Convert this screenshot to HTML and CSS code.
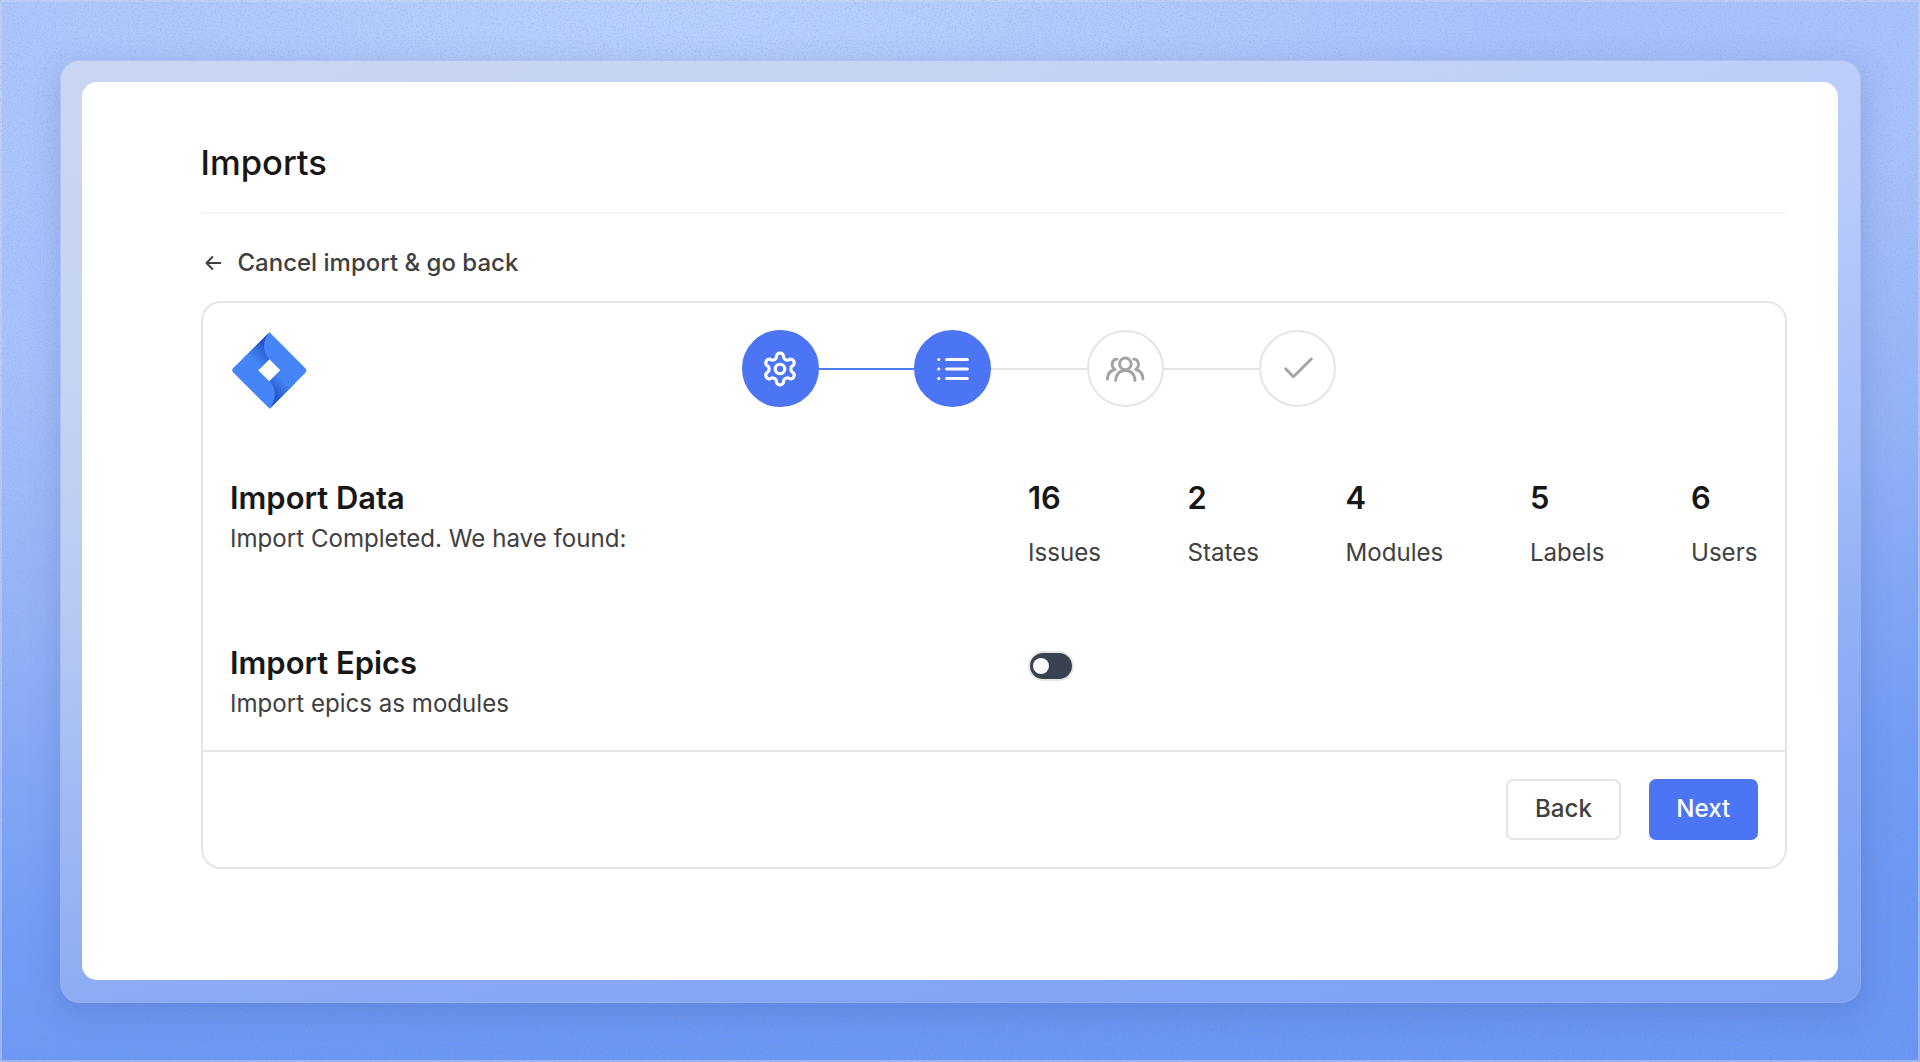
FILE: index.html
```html
<!DOCTYPE html>
<html lang="en">
<head>
<meta charset="utf-8">
<title>Imports</title>
<link rel="stylesheet" href="styles.css">
</head>
<body>
<div class="backdrop">
  <svg class="grain" aria-hidden="true">
    <filter id="noise" x="0" y="0" width="100%" height="100%">
      <feTurbulence type="fractalNoise" baseFrequency="0.6" numOctaves="2" seed="4"/>
      <feColorMatrix values="0 0 0 0 0.25  0 0 0 0 0.38  0 0 0 0 0.7  0 0 0 -7 3.3"/>
    </filter>
    <rect width="100%" height="100%" filter="url(#noise)"/>
  </svg>
  <div class="frame">
    <main class="window">
      <h1 class="page-title">Imports</h1>
      <a class="back-link">
        <svg class="back-arrow" viewBox="0 0 18 18"><path d="M16.4 9H2.400M8.400 3 2.400 9l6 6"/></svg>
        <span>Cancel import &amp; go back</span>
      </a>
      <section class="card">
        <div class="card-body">
          <header class="card-head">
            <svg class="logo" viewBox="96 97 224 230">
              <defs>
                <linearGradient id="fold-top" gradientUnits="userSpaceOnUse" x1="198" y1="136" x2="158" y2="176"><stop offset="0" stop-color="#2353c6"/><stop offset="1" stop-color="#4585f7"/></linearGradient>
                <linearGradient id="fold-bottom" gradientUnits="userSpaceOnUse" x1="220" y1="290" x2="260" y2="250"><stop offset="0" stop-color="#2353c6"/><stop offset="1" stop-color="#4585f7"/></linearGradient>
              </defs>
              <path fill="#4585f7" fill-rule="evenodd" d="M208.500 98 316 206q6 6 0 13L209 327 99 218q-5-6 0-12ZM208 179 174.500 212 208 245 241 212Z"/>
              <path fill="url(#fold-top)" d="M208 98 130 175 170 216 174.500 212 208 179C187 158 186 125 208 98Z"/>
              <path fill="url(#fold-bottom)" d="M209 327 286 250 246 208 241 212 208 245C229 266 230 300 209 327Z"/>
            </svg>
            <div class="steps">
              <div class="step active"><svg class="icon" viewBox="0 0 24 24"><path d="M12.220 2h-.44a2 2 0 0 0-2 2v.18a2 2 0 0 1-1 1.730l-.43.25a2 2 0 0 1-2 0l-.15-.08a2 2 0 0 0-2.730.73l-.22.38a2 2 0 0 0 .73 2.730l.15.1a2 2 0 0 1 1 1.720v.51a2 2 0 0 1-1 1.740l-.15.09a2 2 0 0 0-.73 2.730l.22.38a2 2 0 0 0 2.730.73l.15-.08a2 2 0 0 1 2 0l.43.25a2 2 0 0 1 1 1.730V20a2 2 0 0 0 2 2h.44a2 2 0 0 0 2-2v-.18a2 2 0 0 1 1-1.730l.43-.25a2 2 0 0 1 2 0l.15.08a2 2 0 0 0 2.730-.73l.22-.39a2 2 0 0 0-.73-2.730l-.15-.08a2 2 0 0 1-1-1.740v-.5a2 2 0 0 1 1-1.740l.15-.09a2 2 0 0 0 .73-2.730l-.22-.38a2 2 0 0 0-2.730-.73l-.15.08a2 2 0 0 1-2 0l-.43-.25a2 2 0 0 1-1-1.730V4a2 2 0 0 0-2-2z"/><circle cx="12" cy="12" r="3"/></svg></div>
              <div class="link active"></div>
              <div class="step active"><svg class="icon" viewBox="0 0 24 24"><path d="M8 6h13M8 12h13M8 18h13M3 6h.01M3 12h.01M3 18h.01"/></svg></div>
              <div class="link"></div>
              <div class="step"><svg class="icon-wide" viewBox="63 61.5 120 120"><circle cx="124" cy="106" r="17.500"/><path d="M95 156C95 138 107 126 124 126S153 138 153 156M99 92C85 91 78 113 93 123 78 126 71 137 70 152M149 92C163 91 170 113 155 123 170 126 176 137 177 152"/></svg></div>
              <div class="link"></div>
              <div class="step"><svg class="icon-wide" viewBox="65 61.5 120 120"><path d="M88 121 111 145 165 91.500"/></svg></div>
            </div>
          </header>
          <div class="row">
            <div>
              <h2 class="heading">Import Data</h2>
              <p class="text">Import Completed. We have found:</p>
            </div>
            <div class="stats">
              <div class="stat"><h3 class="heading">16</h3><p class="text">Issues</p></div>
              <div class="stat"><h3 class="heading">2</h3><p class="text">States</p></div>
              <div class="stat"><h3 class="heading">4</h3><p class="text">Modules</p></div>
              <div class="stat"><h3 class="heading">5</h3><p class="text">Labels</p></div>
              <div class="stat"><h3 class="heading">6</h3><p class="text">Users</p></div>
            </div>
          </div>
          <div class="row">
            <div>
              <h2 class="heading">Import Epics</h2>
              <p class="text">Import epics as modules</p>
            </div>
            <button class="toggle" type="button" role="switch" aria-checked="false" aria-label="Import epics as modules"><span class="knob"></span></button>
          </div>
        </div>
        <footer class="card-foot">
          <button class="btn" type="button">Back</button>
          <button class="btn primary" type="button">Next</button>
        </footer>
      </section>
    </main>
  </div>
</div>
</body>
</html>
```
FILE: styles.css
```css
* { box-sizing: border-box; }
body {
  margin: 0;
  font-family: Inter, "Liberation Sans", sans-serif;
  font-size: 24.1px;
  line-height: 34.5px;
  color: #404040;
}
h1, h2, h3, p { margin: 0; }

.backdrop {
  position: relative;
  width: 1920px;
  height: 1062px;
  padding: 60px 59px 59px 60px;
  background:
    radial-gradient(ellipse 900px 500px at 36% 0, rgba(200, 220, 253, .55), rgba(200, 220, 253, 0)),
    linear-gradient(174deg, #a9c2fb 0%, #a8c1fb 28%, #93b2f8 50%, #85a8f6 60%, #719bf5 75%, #6b96f4 86%, #6894f3 100%);
  box-shadow: inset 0 0 0 2px rgba(205, 215, 238, .5);
}
.grain {
  position: absolute;
  inset: 0;
  width: 100%;
  height: 100%;
  opacity: .25;
}
.frame {
  position: relative;
  height: 943px;
  padding: 22px 23.5px 23px 22px;
  border-radius: 20px;
  background:
    linear-gradient(155deg, rgba(246, 243, 232, .42) 0%, rgba(246, 243, 232, .36) 30%, rgba(240, 243, 250, .2) 56%, rgba(240, 243, 250, .12) 100%),
    linear-gradient(174deg, #a9c2fb 0%, #a8c1fb 28%, #93b2f8 50%, #7ea2f5 66%, #6f98f3 84%, #6b96f3 100%);
  box-shadow:
    inset 0 0 0 1px rgba(160, 178, 232, .5),
    0 7px 30px rgba(60, 75, 150, .25);
}

.window {
  height: 897.5px;
  padding: 56.4px 50.5px 0 118.5px;
  border-radius: 15px;
  background: #fff;
}
.page-title {
  padding-bottom: 25px;
  border-bottom: 2px solid #f5f5f5;
  font-size: 34.6px;
  line-height: 48.3px;
  font-weight: 500;
  color: #171717;
}
.back-link {
  display: flex;
  align-items: center;
  gap: 16px;
  margin: 32px 0 21px;
  padding-left: 3px;
  font-size: 24px;
  font-weight: 500;
}
.back-arrow {
  width: 18px;
  height: 18px;
  fill: none;
  stroke: #404040;
  stroke-width: 1.9;
  stroke-linecap: round;
  stroke-linejoin: round;
}

.card {
  border: 2px solid #e5e5e5;
  border-radius: 20px;
}
.card-body {
  display: flex;
  flex-direction: column;
  gap: 68.5px;
  height: 446.5px;
  padding: 27px 27.5px 0 27.5px;
}
.card-head {
  display: grid;
  grid-template-columns: 511.5px auto;
  align-items: start;
  height: 75.5px;
}
.logo {
  width: 74.7px;
  height: 76.7px;
  margin: 2.2px 0 0 2px;
}
.steps { display: flex; align-items: center; }
.step {
  display: grid;
  place-items: center;
  width: 77px;
  height: 77px;
  border: 2px solid #e5e5e5;
  border-radius: 50%;
}
.step.active { border-color: #4c75f5; background: #4c75f5; }
.link { width: 95.5px; height: 2px; background: #e5e5e5; }
.link.active { background: #4c7df0; }
.icon, .icon-wide {
  fill: none;
  stroke-linecap: round;
  stroke-linejoin: round;
}
.icon { width: 38px; height: 38px; stroke: #fff; stroke-width: 2; }
.icon-wide { width: 40px; height: 40px; stroke: #a3a3a3; stroke-width: 8.5; }

.row {
  display: grid;
  grid-template-columns: 798px 1fr;
  align-items: start;
}
.heading {
  font-size: 30.9px;
  line-height: 48.3px;
  font-weight: 600;
  color: #171717;
}
.stats { display: flex; justify-content: space-between; }
.stat { display: grid; gap: 13.5px; }
.toggle {
  display: flex;
  align-items: center;
  width: 46px;
  height: 30px;
  margin: 12.500px 0 0;
  padding: 0 3px;
  border: 2px solid #e5e5e5;
  border-radius: 15px;
  background: #3a4150;
}
.knob {
  width: 16px;
  height: 16px;
  border-radius: 50%;
  background: #fafafa;
}

.card-foot {
  display: flex;
  justify-content: flex-end;
  gap: 27.5px;
  padding: 27px;
  border-top: 2px solid #e5e5e5;
}
.btn {
  width: 115px;
  height: 61px;
  padding: 0;
  border: 2px solid #e5e5e5;
  border-radius: 7px;
  background: #fff;
  color: #404040;
  font: 500 24.1px/34.5px Inter, "Liberation Sans", sans-serif;
}
.btn.primary {
  width: 109.5px;
  border-color: #4c75f5;
  background: #4c75f5;
  color: #fff;
}
```
